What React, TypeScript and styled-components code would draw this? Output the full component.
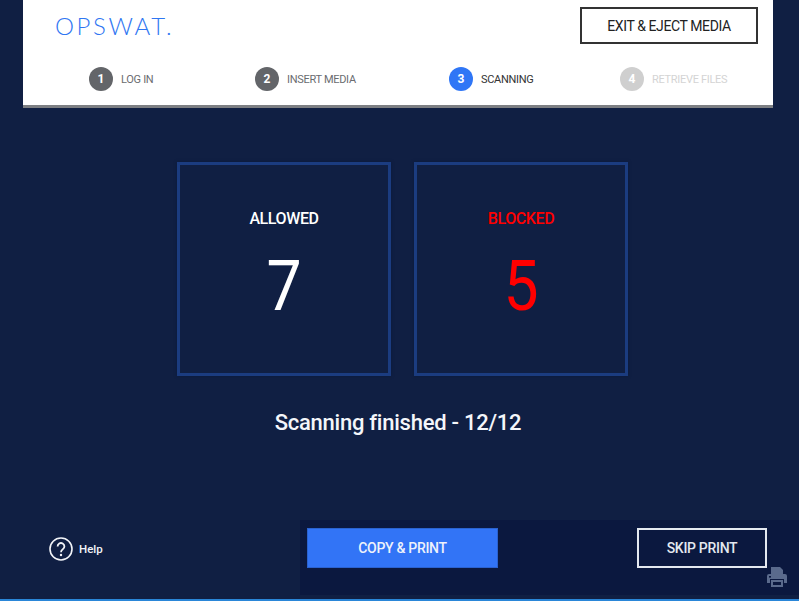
import React from "react";
import styled, { createGlobalStyle } from "styled-components";

const GlobalStyle = createGlobalStyle`
  html, body {
    margin: 0;
    padding: 0;
    background: #101f43;
    font-family: "Roboto", "Liberation Sans", sans-serif;
  }
`;

const Page = styled.div`
  width: 799px;
  height: 601px;
  display: flex;
  flex-direction: column;
  overflow: hidden;
  background: #101f43;
  border-bottom: 2px solid #2a86d8;
  box-sizing: border-box;
`;

const Header = styled.header`
  width: 750px;
  height: 108px;
  margin-left: 23px;
  box-sizing: border-box;
  background: #fff;
  border-bottom: 3px solid #7d7f83;
  flex-shrink: 0;
`;

const TopRow = styled.div`
  height: 61px;
  display: flex;
  align-items: center;
  justify-content: space-between;
  padding: 0 15px 10px 32px;
  box-sizing: border-box;
`;

const Logo = styled.div`
  font-family: "Lato", "Roboto", sans-serif;
  font-weight: 300;
  font-size: 24px;
  letter-spacing: 2.6px;
  line-height: 24px;
  color: #2f76f2;
`;

const ExitButton = styled.button`
  width: 178px;
  height: 37px;
  background: #fff;
  border: 2px solid #333;
  color: #222;
  font-family: inherit;
  font-size: 14px;
  font-weight: 400;
  letter-spacing: -0.4px;
  padding: 0;
`;

const Steps = styled.div`
  display: grid;
  grid-template-columns: 166px 194px 171px 1fr;
  padding-left: 66px;
  align-items: center;
  height: 36px;
`;

const Step = styled.div`
  display: flex;
  align-items: center;
  gap: 8px;
`;

const StepDot = styled.span<{ $bg: string }>`
  width: 24px;
  height: 24px;
  border-radius: 50%;
  background: ${({ $bg }) => $bg};
  color: #fff;
  display: flex;
  align-items: center;
  justify-content: center;
  font-size: 12px;
  font-weight: 700;
`;

const StepLabel = styled.span<{ $color: string }>`
  font-size: 11px;
  letter-spacing: -0.3px;
  color: ${({ $color }) => $color};
`;

const Main = styled.main`
  flex: 1;
  display: flex;
  flex-direction: column;
  align-items: center;
  padding-top: 54px;
`;

const Cards = styled.div`
  display: flex;
  gap: 23px;
  margin-left: 6px;
`;

const Card = styled.div`
  width: 214px;
  height: 214px;
  box-sizing: border-box;
  border: 3px solid #1b3c80;
  box-shadow: 0 0 3px #0b1a3c;
  display: flex;
  flex-direction: column;
  align-items: center;
  padding-top: 44px;
`;

const CardTitle = styled.div<{ $color: string }>`
  font-size: 16px;
  font-weight: 500;
  letter-spacing: -0.4px;
  line-height: 20px;
  color: ${({ $color }) => $color};
`;

const CardValue = styled.div<{ $color: string }>`
  margin-top: 17px;
  font-size: 71px;
  font-weight: 400;
  line-height: 80px;
  transform: scaleX(0.88);
  color: ${({ $color }) => $color};
`;

const Status = styled.div`
  margin-top: 33px;
  margin-right: 3px;
  font-size: 22px;
  font-weight: 500;
  letter-spacing: -0.25px;
  line-height: 28px;
  color: #f4f6fa;
`;

const Footer = styled.footer`
  height: 75px;
  margin-bottom: 4px;
  display: flex;
  flex-shrink: 0;
`;

const HelpArea = styled.div`
  width: 300px;
  display: flex;
  align-items: center;
  gap: 6px;
  padding: 0 0 18px 49px;
  box-sizing: border-box;
`;

const HelpLabel = styled.span`
  font-size: 11.5px;
  font-weight: 500;
  color: #f2f4f8;
`;

const ActionBar = styled.div`
  position: relative;
  flex: 1;
  background: #0b183f;
  display: flex;
  align-items: flex-start;
  justify-content: space-between;
  padding: 8px 32px 0 7px;
`;

const PrimaryButton = styled.button`
  width: 191px;
  height: 40px;
  border: 1px solid #2b62cf;
  background: #3274f6;
  color: #eef2fb;
  font-family: inherit;
  font-size: 14px;
  font-weight: 500;
  letter-spacing: -0.3px;
  padding: 0;
`;

const OutlineButton = styled.button`
  width: 130px;
  height: 40px;
  border: 2px solid #e4e8f0;
  background: transparent;
  color: #e4e8f0;
  font-family: inherit;
  font-size: 14px;
  font-weight: 500;
  letter-spacing: -0.3px;
  padding: 0;
`;

const PrinterBadge = styled.svg`
  position: absolute;
  right: 11px;
  top: 46px;
`;

const App: React.FC = () => (
  <Page>
    <GlobalStyle />
    <Header>
      <TopRow>
        <Logo>OPSWAT.</Logo>
        <ExitButton>EXIT &amp; EJECT MEDIA</ExitButton>
      </TopRow>
      <Steps>
        <Step>
          <StepDot $bg="#636569">1</StepDot>
          <StepLabel $color="#6a6c70">LOG IN</StepLabel>
        </Step>
        <Step>
          <StepDot $bg="#636569">2</StepDot>
          <StepLabel $color="#6a6c70">INSERT MEDIA</StepLabel>
        </Step>
        <Step>
          <StepDot $bg="#2f76f6">3</StepDot>
          <StepLabel $color="#333">SCANNING</StepLabel>
        </Step>
        <Step>
          <StepDot $bg="#cfcfcf">4</StepDot>
          <StepLabel $color="#d4d4d4">RETRIEVE FILES</StepLabel>
        </Step>
      </Steps>
    </Header>
    <Main>
      <Cards>
        <Card>
          <CardTitle $color="#fff">ALLOWED</CardTitle>
          <CardValue $color="#fff">7</CardValue>
        </Card>
        <Card>
          <CardTitle $color="#f00">BLOCKED</CardTitle>
          <CardValue $color="#f00">5</CardValue>
        </Card>
      </Cards>
      <Status>Scanning finished - 12/12</Status>
    </Main>
    <Footer>
      <HelpArea>
        <svg width="24" height="24" viewBox="0 0 24 24" fill="none">
          <circle cx="12" cy="12" r="11" stroke="#f2f4f8" strokeWidth="1.6" />
          <path d="M8.6 9.4a3.4 3.4 0 1 1 5.2 2.9c-1.2.8-1.8 1.4-1.8 2.9" stroke="#f2f4f8" strokeWidth="1.8" />
          <circle cx="12" cy="18" r="1.2" fill="#f2f4f8" />
        </svg>
        <HelpLabel>Help</HelpLabel>
      </HelpArea>
      <ActionBar>
        <PrimaryButton>COPY &amp; PRINT</PrimaryButton>
        <OutlineButton>SKIP PRINT</OutlineButton>
        <PrinterBadge width="22" height="22" viewBox="0 0 22 22" fill="#5a6a8c">
          <path d="M5 1h9l3 3v4H5z" />
          <path d="M3 8h16a2 2 0 0 1 2 2v7h-3v-4H4v4H1v-7a2 2 0 0 1 2-2z" />
          <path d="M5 14h12v7H5z" />
          <rect x="7" y="16" width="8" height="3" fill="#0b183f" />
          <rect x="3" y="10" width="2" height="1.6" fill="#0b183f" />
        </PrinterBadge>
      </ActionBar>
    </Footer>
  </Page>
);

export default App;
